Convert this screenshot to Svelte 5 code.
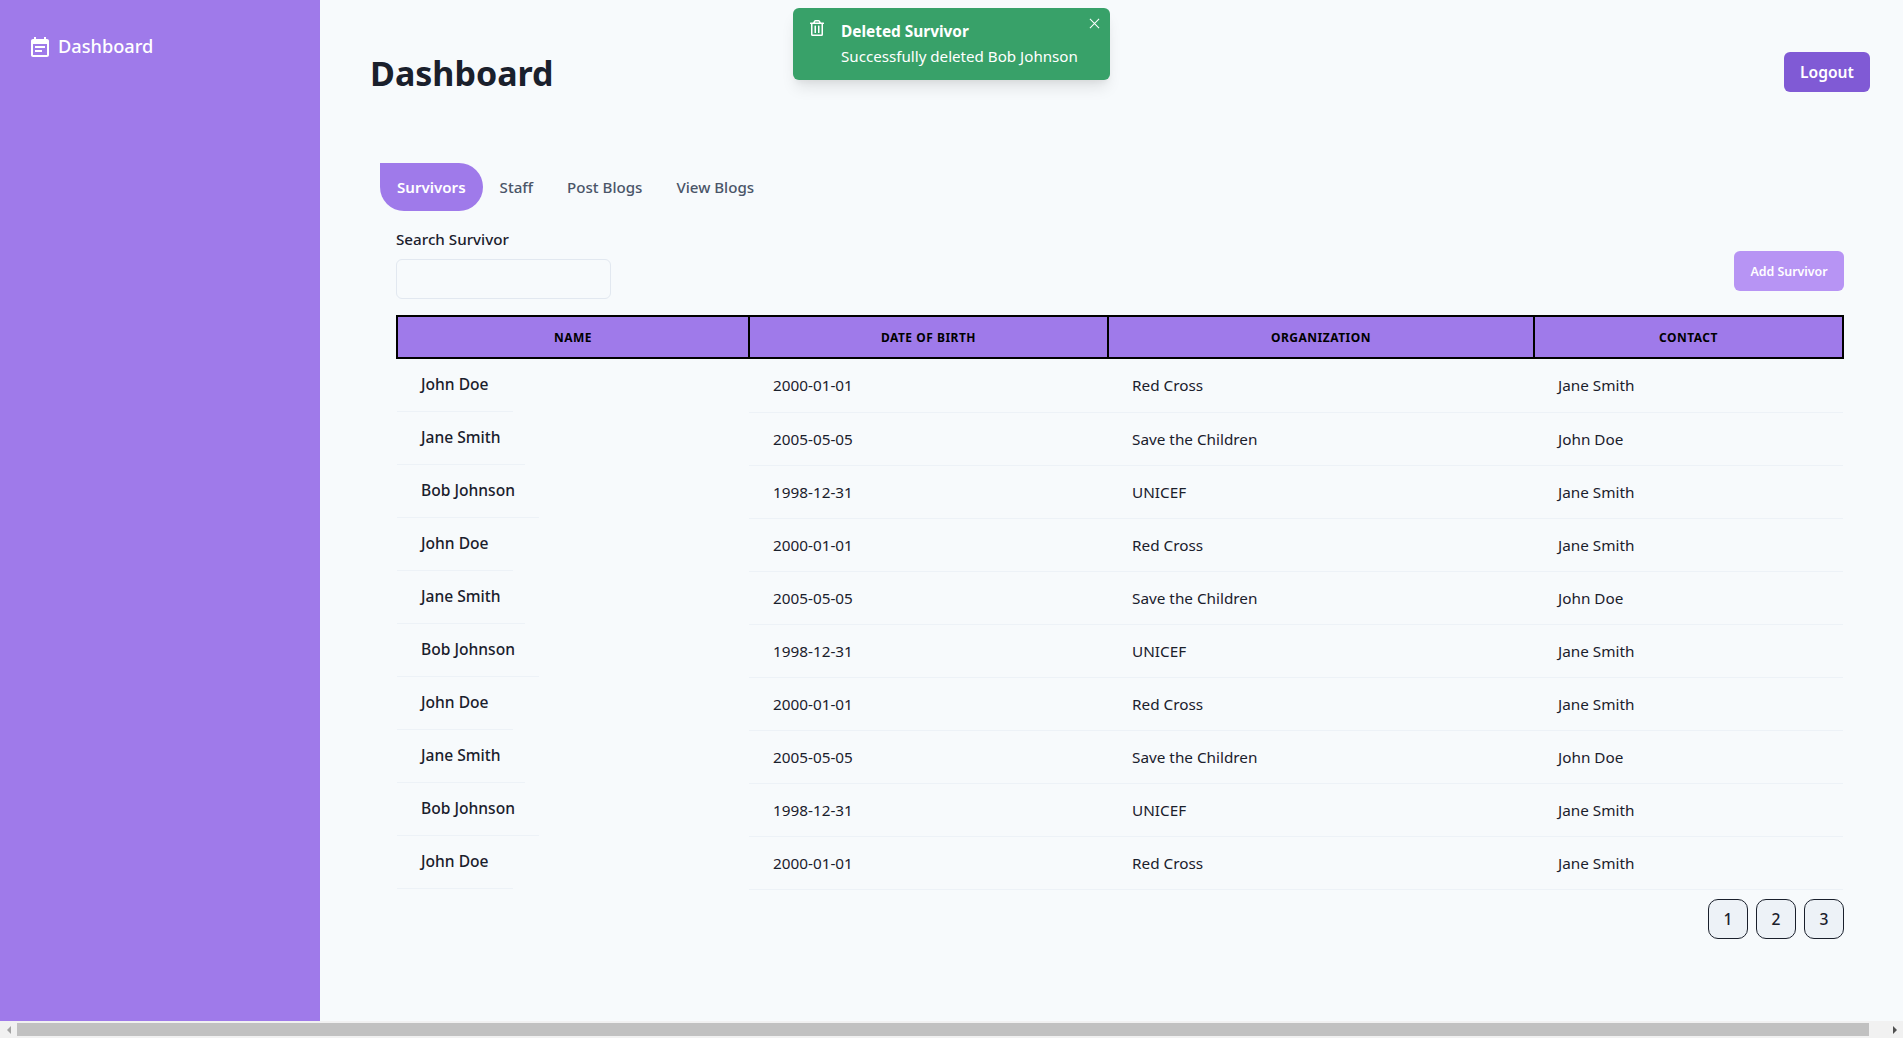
<script lang="ts">
	const people = [
		{ name: "John Doe", dob: "2000-01-01", org: "Red Cross", contact: "Jane Smith" },
		{ name: "Jane Smith", dob: "2005-05-05", org: "Save the Children", contact: "John Doe" },
		{ name: "Bob Johnson", dob: "1998-12-31", org: "UNICEF", contact: "Jane Smith" }
	];
	// the list just repeats in the demo data
	const rows = Array.from({ length: 10 }, (_, i) => people[i % 3]);
	const tabs = ["Survivors", "Staff", "Post Blogs", "View Blogs"];
</script>

<div class="page">
	<div class="shell">
		<aside class="sidebar">
			<a class="side-link" href="#top">
				<svg class="side-icon" viewBox="0 0 24 24" fill="currentColor">
					<path d="M17 10H7v2h10v-2zm2-7h-1V1h-2v2H8V1H6v2H5c-1.11 0-1.99.9-1.99 2L3 19c0 1.1.89 2 2 2h14c1.1 0 2-.9 2-2V5c0-1.1-.9-2-2-2zm0 16H5V8h14v11zm-5-5H7v2h7v-2z" />
				</svg>
				Dashboard
			</a>
		</aside>

		<main class="main">
			<header class="top">
				<h1>Dashboard</h1>
				<button class="logout">Logout</button>
			</header>

			<nav class="tabs">
				{#each tabs as tab, i}
					<button class="tab" class:active={i === 0}>{tab}</button>
				{/each}
			</nav>

			<section class="panel">
				<div class="tools">
					<div class="search">
						<label for="search">Search Survivor</label>
						<input id="search" />
					</div>
					<button class="add">Add Survivor</button>
				</div>

				<table>
					<colgroup>
						<col style="width: 352px" />
						<col style="width: 359px" />
						<col style="width: 426px" />
						<col />
					</colgroup>
					<thead>
						<tr>
							<th>Name</th>
							<th>Date of Birth</th>
							<th>Organization</th>
							<th>Contact</th>
						</tr>
					</thead>
					<tbody>
						{#each rows as row}
							<tr>
								<td class="name-cell"><span class="name">{row.name}</span></td>
								<td>{row.dob}</td>
								<td>{row.org}</td>
								<td>{row.contact}</td>
							</tr>
						{/each}
					</tbody>
				</table>

				<div class="pager">
					<button>1</button>
					<button>2</button>
					<button>3</button>
				</div>
			</section>
		</main>
	</div>

	<div class="scrollbar">
		<span class="arrow left"></span>
		<div class="track"><div class="thumb"></div></div>
		<span class="arrow right"></span>
	</div>

	<div class="toast">
		<svg class="toast-icon" viewBox="0 0 448 512" fill="currentColor">
			<path d="M268 416h24a12 12 0 0 0 12-12V188a12 12 0 0 0-12-12h-24a12 12 0 0 0-12 12v216a12 12 0 0 0 12 12zM432 80h-82.41l-34-56.7A48 48 0 0 0 274.41 0H173.59a48 48 0 0 0-41.16 23.3L98.41 80H16A16 16 0 0 0 0 96v16a16 16 0 0 0 16 16h16v336a48 48 0 0 0 48 48h288a48 48 0 0 0 48-48V128h16a16 16 0 0 0 16-16V96a16 16 0 0 0-16-16zM171.84 50.91A6 6 0 0 1 177 48h94a6 6 0 0 1 5.15 2.91L293.61 80H154.39zM368 464H80V128h288zm-212-48h24a12 12 0 0 0 12-12V188a12 12 0 0 0-12-12h-24a12 12 0 0 0-12 12v216a12 12 0 0 0 12 12z" />
		</svg>
		<div class="toast-text">
			<strong>Deleted Survivor</strong>
			<span>Successfully deleted Bob Johnson</span>
		</div>
		<button class="toast-close" aria-label="Close">
			<svg viewBox="0 0 12 12" width="11" height="11" stroke="currentColor" stroke-width="1.1">
				<path d="M1 1l10 10M11 1L1 11" />
			</svg>
		</button>
	</div>
</div>

<style>
	:global(body) {
		margin: 0;
		background: #f7fafc;
		font-family: "Noto Sans", "Open Sans", sans-serif;
		color: #1a202c;
		overflow: hidden;
	}

	button {
		font-family: inherit;
		cursor: pointer;
	}

	.page {
		position: relative;
		display: flex;
		flex-direction: column;
		height: 1038px;
		overflow: hidden;
	}

	.shell {
		display: flex;
		flex: 1;
		min-height: 0;
	}

	.sidebar {
		width: 320px;
		flex-shrink: 0;
		background: #9f7aea;
		padding: 33px 28px;
		box-sizing: border-box;
	}

	.side-link {
		display: flex;
		align-items: flex-start;
		gap: 6px;
		color: #fff;
		font-size: 18.2px;
		font-weight: 500;
		text-decoration: none;
		line-height: 26px;
	}

	.side-icon {
		width: 24px;
		height: 24px;
		margin-top: 3px;
	}

	.main {
		flex: 1;
		min-width: 0;
		padding: 52px 33px 0 50px;
	}

	.top {
		display: flex;
		justify-content: space-between;
		align-items: center;
		height: 40px;
	}

	h1 {
		margin: 2px 0 0;
		font-size: 34px;
		font-weight: 700;
		line-height: 44px;
	}

	.logout {
		width: 86px;
		height: 40px;
		padding: 0;
		border: 0;
		border-radius: 6px;
		background: #805ad5;
		color: #fff;
		font-size: 15.6px;
		font-weight: 600;
	}

	.tabs {
		display: flex;
		margin: 71px 0 0 10px;
	}

	.tab {
		height: 48px;
		padding: 0 17px;
		border: 0;
		background: none;
		color: #4a5568;
		font-size: 15.1px;
		font-weight: 500;
	}

	.tab.active {
		background: #9f7aea;
		color: #fff;
		font-weight: 600;
		border-radius: 0 24px 24px 24px;
	}

	.panel {
		margin-left: 26px;
		width: 1448px;
	}

	.tools {
		display: flex;
		justify-content: space-between;
		align-items: flex-end;
		margin-top: 16px;
	}

	.search label {
		display: block;
		font-size: 15.2px;
		font-weight: 500;
		line-height: 24px;
		margin-bottom: 8px;
	}

	.search input {
		display: block;
		width: 215px;
		height: 40px;
		box-sizing: border-box;
		border: 1px solid #e2e8f0;
		border-radius: 6px;
		background: transparent;
	}

	.add {
		height: 40px;
		width: 110px;
		margin-bottom: 8px;
		padding: 0;
		border: 0;
		border-radius: 6px;
		background: #b794f4;
		color: #fff;
		font-size: 12.4px;
		font-weight: 600;
	}

	table {
		width: 100%;
		margin-top: 16px;
		border-collapse: collapse;
		table-layout: fixed;
	}

	th {
		height: 40px;
		padding: 0 24px;
		border: 2px solid #000;
		background: #9f7aea;
		color: #000;
		font-size: 12px;
		font-weight: 700;
		letter-spacing: 0.5px;
		text-transform: uppercase;
	}

	td {
		height: 53px;
		padding: 0 24px;
		box-sizing: border-box;
		border-bottom: 1px solid #edf2f7;
		font-size: 15.3px;
	}

	td.name-cell {
		padding: 0;
		border-bottom: 0;
		vertical-align: top;
	}

	.name {
		display: inline-block;
		padding: 14px 24px 15px;
		line-height: 23px;
		font-size: 15.6px;
		font-weight: 500;
		border-bottom: 1px solid #edf2f7;
	}

	.pager {
		display: flex;
		justify-content: flex-end;
		gap: 8px;
		margin-top: 9px;
	}

	.pager button {
		width: 40px;
		height: 40px;
		padding: 0;
		border: 1px solid #1a202c;
		border-radius: 10px;
		background: #edf2f7;
		color: #1a202c;
		font-size: 15.6px;
		font-weight: 500;
	}

	.scrollbar {
		display: flex;
		align-items: center;
		height: 17px;
		background: #f1f1f1;
		flex-shrink: 0;
	}

	.arrow {
		width: 17px;
		height: 17px;
		flex-shrink: 0;
		display: flex;
		align-items: center;
		justify-content: center;
	}

	.arrow::before {
		content: "";
		border-top: 4px solid transparent;
		border-bottom: 4px solid transparent;
	}

	.arrow.left::before {
		border-right: 4px solid #a3a3a3;
	}

	.arrow.right::before {
		border-left: 4px solid #505050;
	}

	.track {
		flex: 1;
		height: 13px;
	}

	.thumb {
		width: 1852px;
		height: 13px;
		background: #c1c1c1;
	}

	.toast {
		position: absolute;
		top: 8px;
		left: 793px;
		width: 317px;
		height: 72px;
		box-sizing: border-box;
		display: flex;
		padding: 12px 12px 0 17px;
		border-radius: 6px;
		background: #38a169;
		color: #fff;
		box-shadow: 0 10px 15px -3px rgba(0, 0, 0, 0.1), 0 4px 6px -2px rgba(0, 0, 0, 0.05);
	}

	.toast-icon {
		width: 14px;
		height: 16px;
		margin: 0 17px 0 0;
	}

	.toast-text {
		display: flex;
		flex-direction: column;
		font-size: 15.15px;
		line-height: 24px;
	}

	.toast-text strong {
		font-size: 15.4px;
	}

	.toast-close {
		position: absolute;
		top: 10px;
		right: 10px;
		padding: 0;
		border: 0;
		background: none;
		color: #fff;
		line-height: 0;
	}
</style>
